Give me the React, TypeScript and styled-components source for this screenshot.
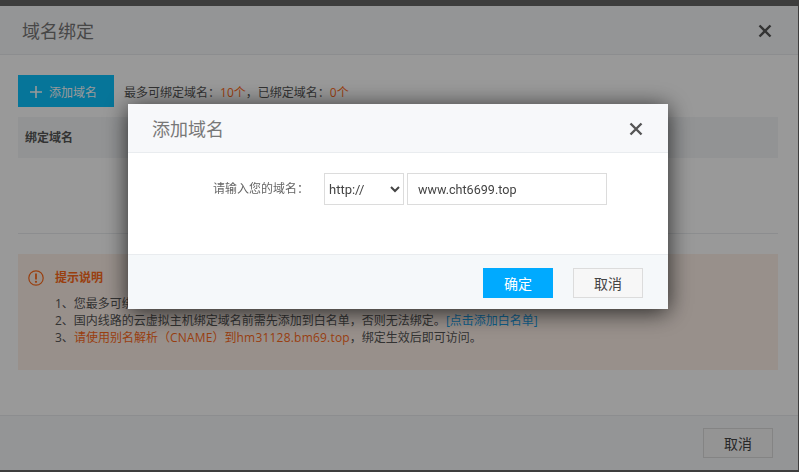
import React from 'react';
import styled, {createGlobalStyle} from 'styled-components';

const Global = createGlobalStyle`
  html, body {
    margin: 0;
    height: 100%;
    background: #666;
    overflow: hidden;
  }
  body {
    font-family: "Open Sans", "Noto Sans CJK SC", sans-serif;
    font-size: 12px;
    color: #555;
  }
`;

const Dialog = styled.div`
  display: flex;
  flex-direction: column;
  box-sizing: border-box;
  width: 798px;
  height: 464px;
  margin-top: 6px;
  background: #fff;
`;

const Header = styled.header<{$tint: string}>`
  display: flex;
  align-items: center;
  justify-content: space-between;
  box-sizing: border-box;
  height: 49px;
  flex: none;
  background: ${p => p.$tint};
  border-bottom: 1px solid #e9ecef;
`;

const Title = styled.h2`
  margin: 0;
  font-size: 18px;
  font-weight: 400;
  color: #777;
`;

const OuterHeader = styled(Header)`
  padding: 0 26px 0 22px;
`;

const Content = styled.div`
  flex: 1;
  padding: 20px 20px 0 18px;
`;

const Toolbar = styled.div`
  display: flex;
  align-items: center;
  gap: 10px;
  height: 32px;
`;

const AddButton = styled.button`
  display: flex;
  align-items: center;
  gap: 7px;
  box-sizing: border-box;
  width: 96px;
  height: 32px;
  padding: 1px 0 0 12px;
  border: 0;
  background: #0bc3ff;
  color: #fff;
  font: inherit;
`;

const Limit = styled.div`
  padding-top: 2px;
  color: #555;
`;

const Accent = styled.span`
  color: #ff6a1a;
`;

const Latin = styled.span`
  letter-spacing: 0.2px;
`;

const TableHead = styled.div`
  display: flex;
  align-items: center;
  box-sizing: border-box;
  height: 41px;
  margin-top: 10px;
  padding: 0 0 2px 7px;
  background: #f3f5f7;
  font-weight: 700;
  color: #555;
`;

const TableBody = styled.div`
  height: 75px;
  border-bottom: 1px solid #e9ecef;
`;

const Notice = styled.section`
  box-sizing: border-box;
  height: 116px;
  margin-top: 20px;
  padding: 15px 0 0 10px;
  background: #fdf0e8;
  line-height: 17px;
`;

const NoticeTitle = styled.div`
  display: flex;
  align-items: center;
  gap: 11px;
  font-weight: 700;
  color: #ff6a1a;
`;

const NoticeList = styled.div`
  margin: 9px 0 0 27px;
`;

const Link = styled.a`
  color: #1ba0e8;
`;

const Footer = styled.footer<{$tint: string; $nudge: number}>`
  display: flex;
  align-items: center;
  justify-content: flex-end;
  gap: 20px;
  box-sizing: border-box;
  height: 55px;
  flex: none;
  padding: ${p => p.$nudge}px 25px 0 0;
  background: ${p => p.$tint};
  border-top: 1px solid #e9ecef;
`;

const ActionButton = styled.button<{$primary?: boolean}>`
  box-sizing: border-box;
  width: 70px;
  height: 30px;
  padding: 0;
  border: 1px solid ${p => (p.$primary ? '#0af' : '#dcdcdc')};
  background: ${p => (p.$primary ? '#0af' : '#f7f7f7')};
  color: ${p => (p.$primary ? '#fff' : '#444')};
  font-family: inherit;
  font-size: 14px;
`;

const Overlay = styled.div`
  position: fixed;
  inset: 0;
  display: flex;
  align-items: flex-start;
  padding: 104px 0 0 128px;
  background: rgba(0, 0, 0, 0.4);
`;

const Modal = styled.div`
  display: flex;
  flex-direction: column;
  width: 540px;
  height: 205px;
  background: #fff;
  box-shadow: 0 3px 22px rgba(0, 0, 0, 0.75);
`;

const ModalHeader = styled(Header)`
  padding: 0 25px 0 24px;
`;

const FormRow = styled.form`
  flex: 1;
  display: flex;
  align-items: flex-start;
  padding-top: 20px;
`;

const Label = styled.label`
  box-sizing: border-box;
  width: 181px;
  height: 32px;
  line-height: 32px;
  margin-right: 15px;
  text-align: right;
  color: #666;
`;

const Select = styled.select`
  box-sizing: border-box;
  width: 80px;
  height: 32px;
  margin-right: 3px;
  padding-left: 0;
  border: 1px solid #dcdcdc;
  border-radius: 0;
  background: #fff;
  color: #444;
  font-family: Roboto, sans-serif;
  font-size: 13px;
`;

const Input = styled.input`
  box-sizing: border-box;
  width: 200px;
  height: 32px;
  padding: 0 10px;
  border: 1px solid #dcdcdc;
  color: #444;
  font-family: Roboto, sans-serif;
  font-size: 12.6px;
`;

const CloseSvg = styled.svg`
  margin-top: 2px;
`;

const CloseIcon = () => (
  <CloseSvg width="14" height="14" viewBox="0 0 14 14" aria-hidden="true">
    <path d="M1.5 1.5l11 11M12.5 1.5l-11 11" stroke="#555" strokeWidth="2.4" fill="none" />
  </CloseSvg>
);

const PlusIcon = () => (
  <svg width="12" height="12" viewBox="0 0 12 12" aria-hidden="true">
    <path d="M6 0v12M0 6h12" stroke="#fff" strokeWidth="1.6" fill="none" />
  </svg>
);

const WarnIcon = () => (
  <svg width="16" height="16" viewBox="0 0 16 16" aria-hidden="true">
    <circle cx="8" cy="8" r="7.2" stroke="#ff6a1a" strokeWidth="1.2" fill="none" />
    <path d="M8 3.6v5.8" stroke="#ff6a1a" strokeWidth="1.8" />
    <circle cx="8" cy="11.8" r="1.1" fill="#ff6a1a" />
  </svg>
);

export default function App() {
  return (
    <>
      <Global />
      <Dialog>
        <OuterHeader $tint="#f7f8fa">
          <Title>域名绑定</Title>
          <CloseIcon />
        </OuterHeader>
        <Content>
          <Toolbar>
            <AddButton>
              <PlusIcon />
              添加域名
            </AddButton>
            <Limit>
              最多可绑定域名：<Accent>10个</Accent>，已绑定域名：<Accent>0个</Accent>
            </Limit>
          </Toolbar>
          <TableHead>绑定域名</TableHead>
          <TableBody />
          <Notice>
            <NoticeTitle>
              <WarnIcon />
              提示说明
            </NoticeTitle>
            <NoticeList>
              <div>1、您最多可绑定10个域名。</div>
              <div>
                2、国内线路的云虚拟主机绑定域名前需先添加到白名单，否则无法绑定。
                <Link>[点击添加白名单]</Link>
              </div>
              <div>
                3、<Accent>请使用别名解析（<Latin>CNAME</Latin>）到<Latin>hm31128.bm69.top</Latin></Accent>，绑定生效后即可访问。
              </div>
            </NoticeList>
          </Notice>
        </Content>
        <Footer $tint="#f7f8fa" $nudge={0}>
          <ActionButton>取消</ActionButton>
        </Footer>
      </Dialog>
      <Overlay>
        <Modal>
          <ModalHeader $tint="#f7f8fa">
            <Title>添加域名</Title>
            <CloseIcon />
          </ModalHeader>
          <FormRow>
            <Label>请输入您的域名：</Label>
            <Select defaultValue="http">
              <option value="http">http://</option>
              <option value="https">https://</option>
            </Select>
            <Input defaultValue="www.cht6699.top" />
          </FormRow>
          <Footer $tint="#f5f8fa" $nudge={1}>
            <ActionButton $primary>确定</ActionButton>
            <ActionButton>取消</ActionButton>
          </Footer>
        </Modal>
      </Overlay>
    </>
  );
}
